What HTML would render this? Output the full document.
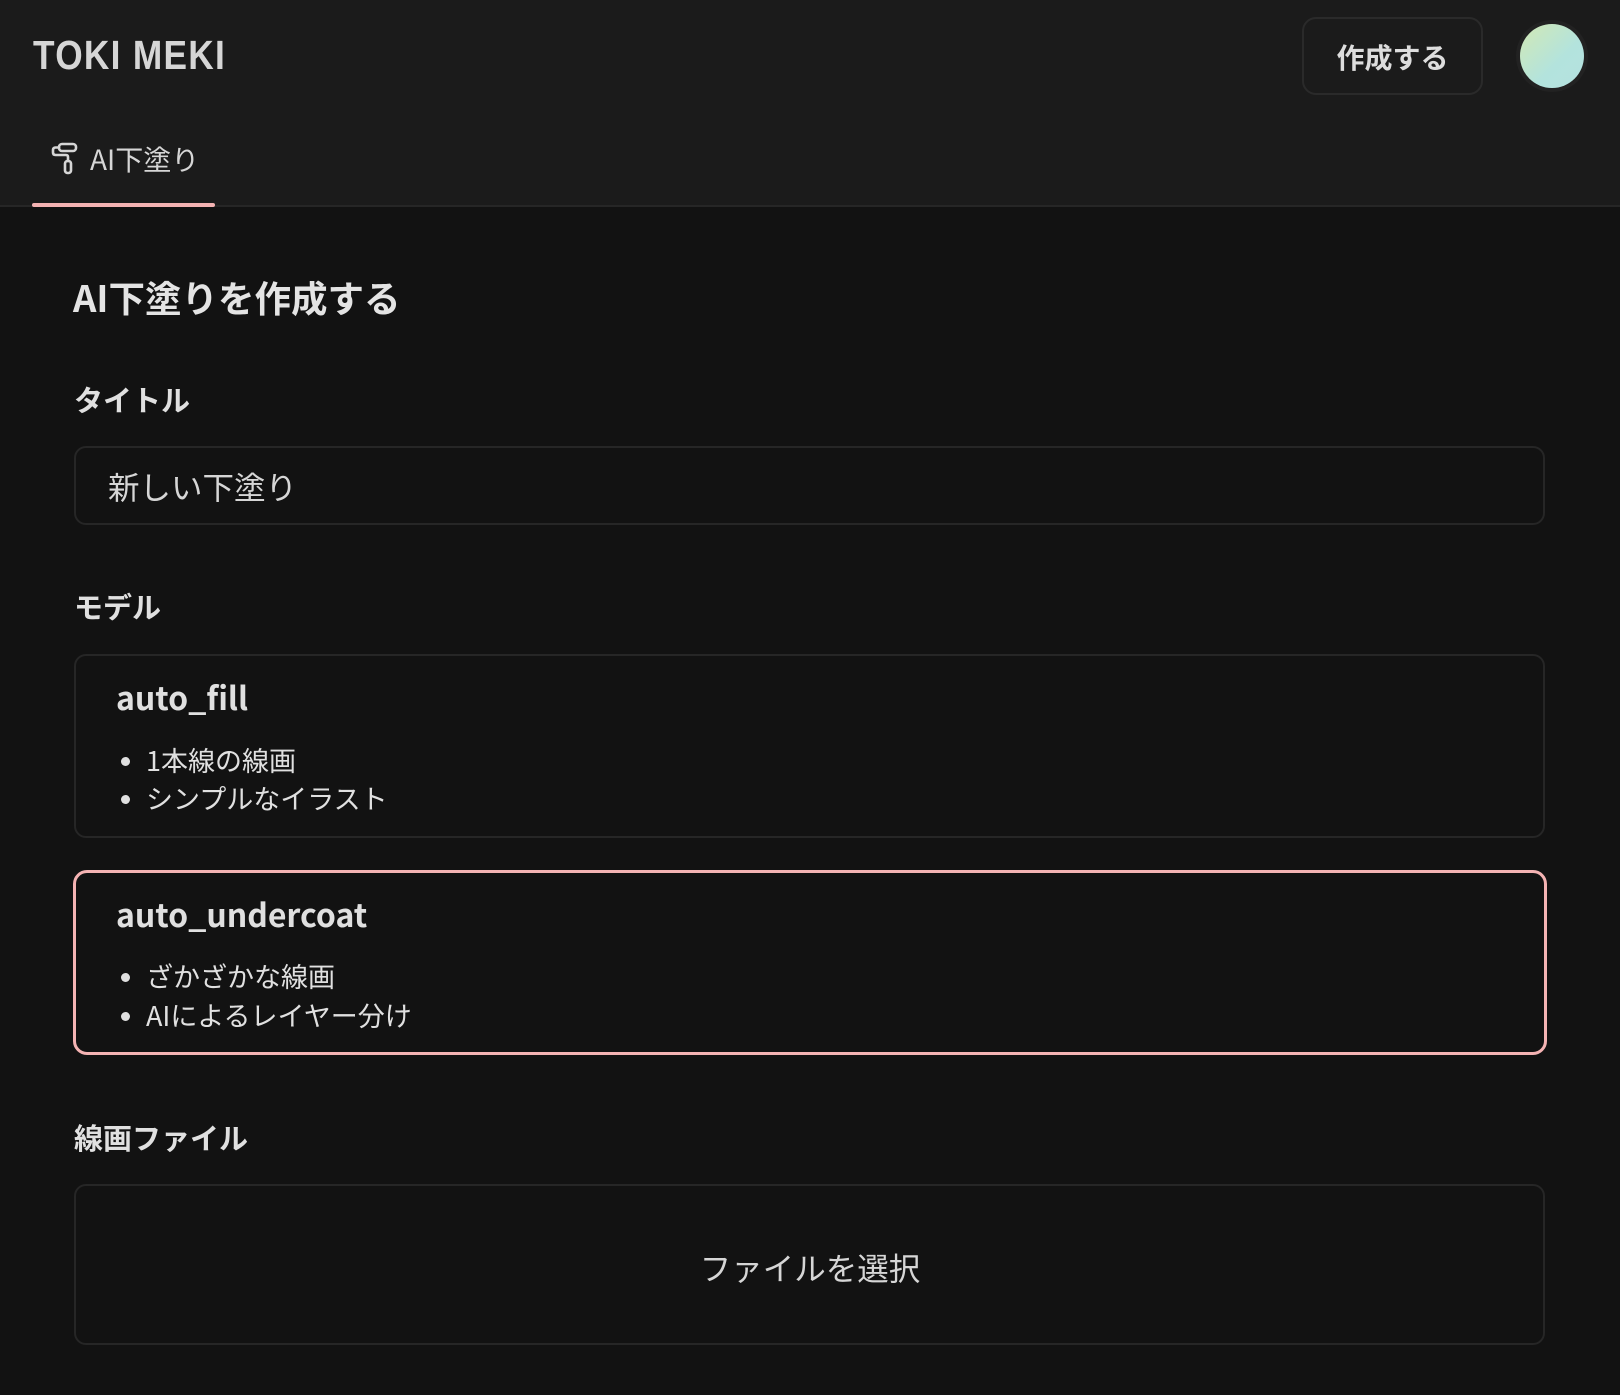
<!DOCTYPE html>
<html><head><meta charset="utf-8"><style>
*{margin:0;padding:0;box-sizing:border-box}
body{width:1620px;height:1395px;background:#121212;color:#e0e0e0;font-family:"Noto Sans CJK JP","Liberation Sans",sans-serif;position:relative;overflow:hidden}
.a{position:absolute;white-space:nowrap}
header{position:absolute;left:0;top:0;width:1620px;height:207px;background:#1b1b1b;border-bottom:2px solid #262626}
.box{position:absolute;left:74px;width:1471px;border:2px solid #262626;border-radius:12px}
.lbl{font-size:29px;font-weight:700;line-height:40px}
.bl{position:absolute;font-size:27px;line-height:38px;left:146px}
.bl::before{content:"";position:absolute;left:-25px;top:16px;width:9px;height:9px;border-radius:50%;background:#e0e0e0}
</style></head><body>
<header>
<div class="a" style="left:33px;top:30px;font-family:'Liberation Sans',sans-serif;font-size:41px;line-height:50px;color:#d6d6d6;font-weight:700;letter-spacing:1.5px;transform:scaleX(0.86);transform-origin:left">TOKI MEKI</div>
<svg class="a" style="left:50px;top:141px" width="30" height="34" viewBox="0 0 30 34" fill="none" stroke="#d6d6d6" stroke-width="2.6" stroke-linecap="round" stroke-linejoin="round"><rect x="9" y="3" width="17" height="7" rx="3"/><path d="M9 6.5H5.5Q3 6.5 3 9v2.5q0 2.5 2.5 2.5H16q2 0 2 2v4"/><rect x="15" y="20" width="6" height="12" rx="2.5"/></svg>
<div class="a" style="left:90px;top:140px;font-size:28px;line-height:38px;color:#d6d6d6">AI下塗り</div>
<div class="a" style="left:32px;top:203px;width:183px;height:4px;background:#f4b3b3;border-radius:2px"></div>
<div class="a" style="left:1302px;top:17px;width:181px;height:78px;border:2px solid #2a2a2a;border-radius:14px;font-size:28px;font-weight:700;line-height:76px;text-align:center;color:#ddd">作成する</div>
<div class="a" style="left:1516px;top:20px;width:72px;height:72px;border-radius:50%;background:#222;padding:4px"><div style="width:64px;height:64px;border-radius:50%;background:linear-gradient(135deg,#d2e9b4,#b3e3dd 60%,#b5e2e0)"></div></div>
</header>
<div class="a" style="left:73px;top:273px;font-size:36.5px;font-weight:700;line-height:48px;color:#e4e4e4">AI下塗りを作成する</div>
<div class="a lbl" style="left:74px;top:379px">タイトル</div>
<div class="box" style="top:446px;height:79px"></div>
<div class="a" style="left:108px;top:465px;font-size:31.5px;line-height:42px;color:#d6d6d6">新しい下塗り</div>
<div class="a lbl" style="left:74px;top:586px">モデル</div>
<div class="box" style="top:654px;height:184px"></div>
<div class="a" style="left:116px;top:675px;font-size:32px;font-weight:700;line-height:44px">auto_fill</div>
<div class="bl" style="top:741px">1本線の線画</div>
<div class="bl" style="top:779px">シンプルなイラスト</div>
<div class="box" style="left:73px;width:1474px;top:870px;height:185px;border:3px solid #f4b3b3;border-radius:14px"></div>
<div class="a" style="left:116px;top:892px;font-size:32px;font-weight:700;line-height:44px">auto_undercoat</div>
<div class="bl" style="top:957px">ざかざかな線画</div>
<div class="bl" style="top:996px">AIによるレイヤー分け</div>
<div class="a lbl" style="left:74px;top:1117px">線画ファイル</div>
<div class="box" style="top:1184px;height:161px"></div>
<div class="a" style="left:610px;width:400px;text-align:center;top:1245px;font-size:31.5px;line-height:44px;color:#d6d6d6">ファイルを選択</div>
</body></html>
